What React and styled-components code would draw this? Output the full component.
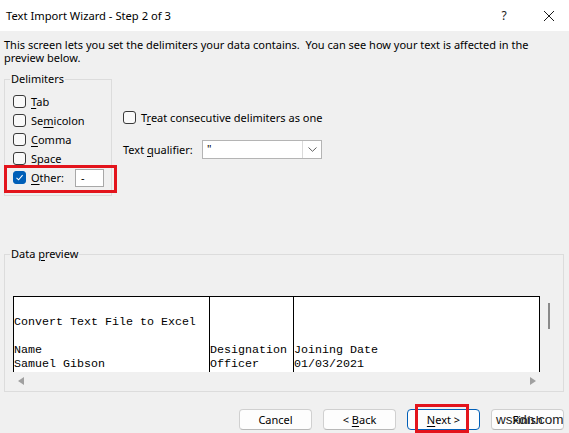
import React from 'react'
import styled, { createGlobalStyle } from 'styled-components'

const GlobalStyle = createGlobalStyle`
  html, body {
    margin: 0;
    padding: 0;
    background: #f0f0f0;
  }
`

const UI_FONT = `"Segoe UI", "Noto Sans", "Liberation Sans", sans-serif`

const Window = styled.div`
  position: relative;
  width: 569px;
  height: 433px;
  overflow: hidden;
  background: #f0f0f0;
  color: #000;
  font-family: ${UI_FONT};
  font-size: 11px;
  line-height: 14px;
  display: flex;
  flex-direction: column;
`

const TitleBar = styled.div`
  height: 31px;
  flex-shrink: 0;
  background: #fff;
  display: flex;
  align-items: center;
  padding-left: 6px;
`

const Title = styled.div`
  flex: 1;
  font-size: 11.2px;
`

const TitleButton = styled.div`
  width: ${p => p.$w}px;
  height: 100%;
  display: flex;
  align-items: center;
  justify-content: center;
  font-size: 12px;
  color: #1a1a1a;
`

const Intro = styled.div`
  padding: 7px 4px 0;
  line-height: 13px;
  white-space: nowrap;
`

const Middle = styled.div`
  display: flex;
  align-items: flex-start;
  margin-top: 8px;
`

const Group = styled.fieldset`
  box-sizing: border-box;
  margin: 0 0 0 4px;
  width: ${p => p.$w}px;
  height: ${p => p.$h}px;
  padding: ${p => p.$pt}px 7px 0 8px;
  border: 1px solid #dcdcdc;
  min-width: 0;

  legend {
    margin-left: -3px;
    padding: 0 1px;
    line-height: 14px;
  }
`

const Row = styled.div`
  position: relative;
  height: 19px;
  display: flex;
  align-items: center;
  white-space: nowrap;
`

const HighlightRow = styled(Row)`
  margin-right: -7px;

  &::after {
    content: '';
    position: absolute;
    top: -3px;
    bottom: -6px;
    left: -9px;
    right: -6px;
    border: 3px solid #e3141c;
    pointer-events: none;
  }
`

const Box = styled.span`
  box-sizing: border-box;
  width: 13px;
  height: 13px;
  margin-right: 5px;
  flex-shrink: 0;
  border-radius: 3px;
  border: 1px solid ${p => (p.$checked ? '#005fb8' : '#3a3a3a')};
  background: ${p => (p.$checked ? '#005fb8' : '#f9f9f9')};
  display: flex;
  align-items: center;
  justify-content: center;
`

const Key = styled.span`
  text-decoration: underline;
  text-underline-offset: 2px;
`

const SmallInput = styled.div`
  box-sizing: border-box;
  width: 29px;
  height: 18px;
  margin-left: auto;
  margin-right: 7px;
  padding-left: 5px;
  background: #fff;
  border: 1px solid #a8a8a8;
  line-height: 16px;
`

const Options = styled.div`
  margin-left: 11px;
  padding-top: 36px;
`

const QualifierRow = styled(Row)`
  margin-top: 13px;
`

const QualifierLabel = styled.span`
  width: 79px;
`

const Select = styled.div`
  box-sizing: border-box;
  width: 120px;
  height: 19px;
  background: #fff;
  border: 1px solid #b4b4b4;
  display: flex;
  align-items: stretch;
`

const SelectValue = styled.span`
  flex: 1;
  padding-left: 4px;
  line-height: 15px;
`

const SelectArrow = styled.span`
  width: 18px;
  border-left: 1px solid #dadada;
  display: flex;
  align-items: center;
  justify-content: center;
`

const PreviewGroup = styled(Group)`
  margin-top: 51px;
`

const Scroller = styled.div`
  display: grid;
  grid-template-columns: 527px 16px;
  grid-template-rows: 76px 16px;
`

const Sheet = styled.div`
  box-sizing: border-box;
  background: #fff;
  border: 1px solid #000;
  border-bottom: none;
  display: grid;
  grid-template-columns: 195px 84px 1fr;
  overflow: hidden;
`

const Column = styled.div`
  border-left: ${p => (p.$first ? 'none' : '1px solid #000')};
  padding-top: 4px;
  font-family: "Liberation Mono", "Courier New", monospace;
  font-size: 11.67px;
  line-height: 14px;
  white-space: pre;
`

const VTrack = styled.div`
  display: flex;
  justify-content: center;
  padding-left: 2px;
  padding-top: 7px;
`

const Thumb = styled.div`
  width: 2px;
  height: 26px;
  background: #8a8a8a;
`

const HTrack = styled.div`
  display: flex;
  align-items: center;
  justify-content: space-between;
  padding: 2px 4px 0 5px;
`

const Footer = styled.div`
  display: flex;
  justify-content: flex-end;
  gap: 11px;
  padding-right: 5px;
  margin-top: 17px;
`

const Button = styled.div`
  position: relative;
  box-sizing: border-box;
  width: 73px;
  height: 21px;
  border-radius: 4px;
  background: #fdfdfd;
  border: 1px solid ${p => (p.$primary ? '#005fb8' : '#d0d0d0')};
  border-bottom-color: ${p => (p.$primary ? '#005fb8' : '#b8b8b8')};
  display: flex;
  align-items: center;
  justify-content: center;
  white-space: pre;

  ${p =>
    p.$marked &&
    `
    &::after {
      content: '';
      position: absolute;
      top: -6px;
      bottom: -4px;
      left: 7px;
      right: 10px;
      border: 3px solid #e3141c;
    }
  `}
`

const Watermark = styled.span`
  position: absolute;
  left: 496px;
  top: 413px;
  font-family: "Liberation Sans", Arial, sans-serif;
  font-size: 13.5px;
  color: #222;
`

function Check({ checked, children }) {
  return (
    <>
      <Box $checked={checked}>
        {checked && (
          <svg width="9" height="9" viewBox="0 0 9 9">
            <path d="M1.5 4.8 L3.6 6.8 L7.6 2.2" fill="none" stroke="#fff" strokeWidth="1.1" />
          </svg>
        )}
      </Box>
      <span>{children}</span>
    </>
  )
}

const preview = [
  ['', '', ''],
  ['Convert Text File to Excel', '', ''],
  ['', '', ''],
  ['Name', 'Designation', 'Joining Date'],
  ['Samuel Gibson', 'Officer', '01/03/2021'],
]

export default function App() {
  return (
    <Window>
      <GlobalStyle />
      <TitleBar>
        <Title>Text Import Wizard - Step 2 of 3</Title>
        <TitleButton $w={50}>?</TitleButton>
        <TitleButton $w={40}>
          <svg width="12" height="12" viewBox="0 0 12 12">
            <path d="M1 1 L11 11 M11 1 L1 11" stroke="#1a1a1a" strokeWidth="1" />
          </svg>
        </TitleButton>
      </TitleBar>

      <Intro>
        This screen lets you set the delimiters your data contains.&nbsp; You can see how your text is affected in the
        <br />
        preview below.
      </Intro>

      <Middle>
        <Group $w={108} $h={124} $pt={6}>
          <legend>Delimiters</legend>
          <Row>
            <Check><Key>T</Key>ab</Check>
          </Row>
          <Row>
            <Check>Se<Key>m</Key>icolon</Check>
          </Row>
          <Row>
            <Check><Key>C</Key>omma</Check>
          </Row>
          <Row>
            <Check><Key>S</Key>pace</Check>
          </Row>
          <HighlightRow>
            <Check checked><Key>O</Key>ther:</Check>
            <SmallInput>-</SmallInput>
          </HighlightRow>
        </Group>

        <Options>
          <Row>
            <Check>T<Key>r</Key>eat consecutive delimiters as one</Check>
          </Row>
          <QualifierRow>
            <QualifierLabel>Text <Key>q</Key>ualifier:</QualifierLabel>
            <Select>
              <SelectValue>"</SelectValue>
              <SelectArrow>
                <svg width="9" height="5" viewBox="0 0 9 5">
                  <path d="M0.5 0.5 L4.5 4.3 L8.5 0.5" fill="none" stroke="#606060" strokeWidth="1" />
                </svg>
              </SelectArrow>
            </Select>
          </QualifierRow>
        </Options>
      </Middle>

      <PreviewGroup $w={560} $h={145} $pt={35}>
        <legend>Data <Key>p</Key>review</legend>
        <Scroller>
          <Sheet>
            {[0, 1, 2].map(c => (
              <Column key={c} $first={c === 0}>
                {preview.map(r => r[c]).join('\n')}
              </Column>
            ))}
          </Sheet>
          <VTrack>
            <Thumb />
          </VTrack>
          <HTrack>
            <svg width="6" height="8" viewBox="0 0 6 8">
              <path d="M6 0 L0 4 L6 8 Z" fill="#a0a0a0" />
            </svg>
            <svg width="6" height="8" viewBox="0 0 6 8">
              <path d="M0 0 L6 4 L0 8 Z" fill="#a0a0a0" />
            </svg>
          </HTrack>
          <div />
        </Scroller>
      </PreviewGroup>

      <Footer>
        <Button>Cancel</Button>
        <Button>&lt; <Key>B</Key>ack</Button>
        <Button $primary $marked><Key>N</Key>ext &gt;</Button>
        <Button>Finish</Button>
      </Footer>
      <Watermark>wsxdn.com</Watermark>
    </Window>
  )
}
